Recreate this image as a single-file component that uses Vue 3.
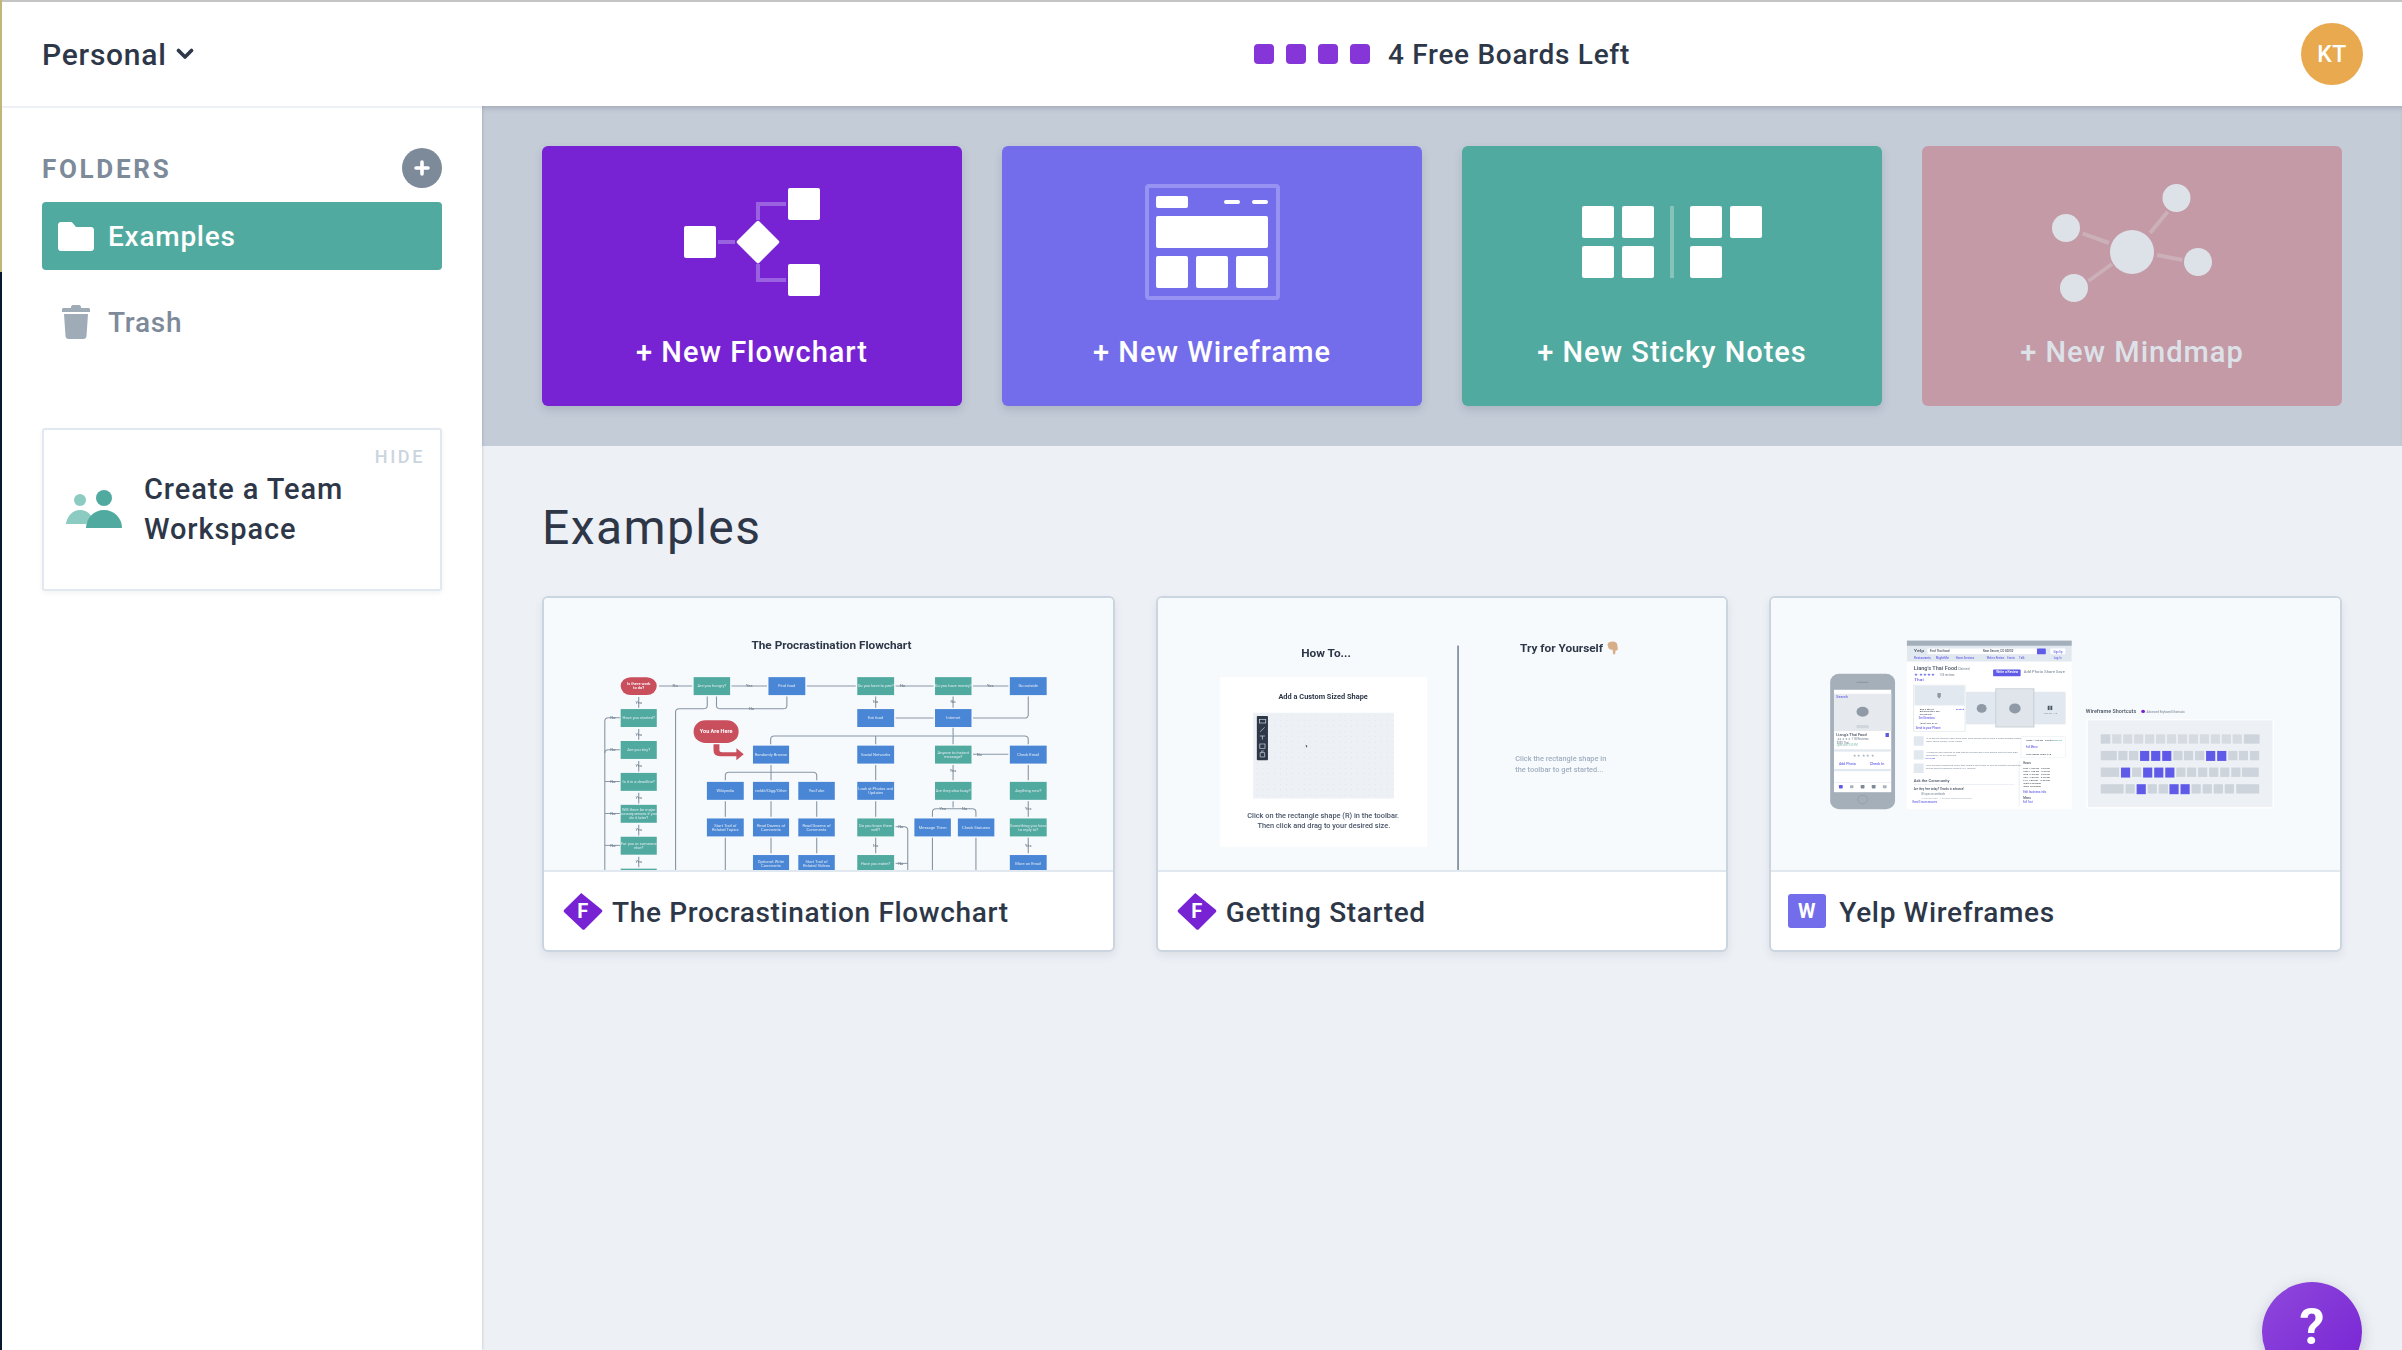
<script setup>
const B = '#4a86d6', G = '#51aa9f', R = '#c94f5d'
const flowNodes = [
  [416,260,515,314,G,'Are you hungry?'],[619,260,719,314,B,'Find food'],[860,260,960,314,G,'Do you have to pee?'],
  [1071,260,1170,314,G,'Do you have money?'],[1274,260,1374,314,B,'Go outside'],
  [218,356,316,410,G,'Have you started?'],[218,452,316,506,G,'Are you tiny?'],[218,548,316,602,G,'Is it in a deadline?'],
  [218,644,316,698,G,'Will there be major\nconsequences if you\ndo it later?'],[218,740,316,794,G,'For you or someone\nelse?'],[218,836,316,890,G,''],
  [860,356,960,410,B,'Eat food'],[1071,356,1170,410,B,'Internet'],
  [577,466,675,520,B,'Randomly Browse'],[860,466,960,520,B,'Social Networks'],[1071,466,1170,520,G,'Anyone to instant\nmessage?'],[1274,466,1374,520,B,'Check Email'],
  [452,575,552,629,B,'Wikipedia'],[577,575,675,629,B,'reddit/Digg/Other'],[700,575,799,629,B,'YouTube'],[860,575,960,629,B,'Look at Photos and\nUpdates'],
  [1071,575,1170,629,G,'Are they also busy?'],[1274,575,1374,629,G,'Anything new?'],
  [452,685,552,739,B,'Start Trail of\nRelated Topics'],[577,685,675,739,B,'Read Dozens of\nComments'],[700,685,799,739,B,'Read Dozens of\nComments'],
  [860,685,960,739,G,'Do you know them\nwell?'],[1015,685,1114,739,B,'Message Them'],[1133,685,1232,739,B,'Check Statuses'],[1274,685,1374,739,G,'Something you have\nto reply to?'],
  [577,795,675,849,B,'Optional: Write\nComments'],[700,795,799,849,B,'Start Trail of\nRelated Videos'],[860,795,960,849,G,'Have you eaten?'],[1274,795,1374,849,B,'More on Email']
].map(([x1,y1,x2,y2,fill,label]) => ({ x: x1, y: y1, w: x2-x1, h: y2-y1, fill, lines: label.split('\n') }))

const flowLines = [
  'M322 287H412','M519 287H615','M723 287H856','M964 287H1067','M1174 287H1270',
  'M267 320V352','M267 416V448','M267 512V544','M267 608V640','M267 704V736','M267 800V832',
  'M216 382H185Q175 382 175 392V840','M216 478H185Q175 478 175 488','M216 574H175','M216 670H175','M216 766H175',
  'M478 318V345Q478 355 488 355H660Q669 355 669 345V318','M453 318V345Q453 355 443 355H377Q367 355 367 365V840',
  'M910 318V352','M1120 318V352','M964 383H1067','M1324 318V372Q1324 383 1314 383H1174',
  'M1120 412V436','M625 462V447Q625 437 635 437H1314Q1324 437 1324 447V462','M910 437V462','M1120 437V462',
  'M1174 492H1270','M1120 524V570','M626 524V570','M502 570V556Q502 546 512 546H740Q750 546 750 556V570',
  'M910 524V570','M1324 524V570','M502 633V680','M626 633V680','M750 633V680','M910 633V680','M1324 633V680','M1120 633V652',
  'M1064 680V666Q1064 656 1074 656H1172Q1182 656 1182 666V680','M626 743V790','M750 743V790','M910 743V790','M1324 743V790',
  'M502 743V840','M1064 743V840','M1182 743V840','M964 710H987Q997 710 997 720V840','M964 820H997'
]
const flowTags = [
  [366,287,'No'],[567,287,'Yes'],[983,287,'No'],[1221,287,'Yes'],[267,336,'Yes'],[267,432,'Yes'],[267,526,'Yes'],[267,622,'Yes'],[267,718,'Yes'],[267,814,'Yes'],
  [197,382,'No'],[197,478,'No'],[197,574,'No'],[197,670,'No'],[197,766,'No'],[573,355,'No'],[910,335,'No'],[1120,335,'No'],[1191,492,'No'],[1120,540,'Yes'],
  [1092,656,'Yes'],[1151,656,'No'],[978,710,'No'],[910,767,'No'],[978,820,'No'],[1324,656,'Yes'],[1324,767,'Yes']
].map(([x,y,t]) => ({ x, y, t }))

const dots = []
for (let x = 288; x < 659; x += 16) for (let y = 374; y < 622; y += 16) dots.push({ x, y })

const KEY = '#cdd4db', PUR = '#5f5be8'
const keys = []
const addKey = (x, y, w, fill) => keys.push({ x, y, w, h: fill === PUR ? 30 : 28, fill })
;[[890,25],[1265,41]].forEach(([x,w]) => addKey(x,432,w,KEY))
for (let i = 0; i < 12; i++) addKey(920 + i*28.7,432,24,'#d5dbe1')
addKey(890,482,42,KEY)
;[[936,0],[964,0],[993,1],[1022,1],[1051,1],[1080,0],[1108,0],[1137,0],[1166,1],[1195,1],[1224,0],[1252,0],[1281,0]].forEach(([x,p]) => addKey(x,482,24,p?PUR:KEY))
addKey(890,532,48,KEY)
;[[943,1],[972,0],[1001,1],[1030,1],[1059,1],[1088,0],[1116,0],[1145,0],[1174,0],[1203,0],[1232,0]].forEach(([x,p]) => addKey(x,532,24,p?PUR:KEY))
addKey(1260,532,44,KEY)
addKey(890,582,60,KEY)
;[[955,0],[984,1],[1013,0],[1042,0],[1070,1],[1099,1],[1128,0],[1157,0],[1186,0],[1215,0]].forEach(([x,p]) => addKey(x,582,24,p?PUR:KEY))
addKey(1245,582,60,KEY)

const yelpRects = [
  [181,250,351,657,'#a5afba',24],[250,274,282,278,'#8f9aa6',2],[191,298,341,606,'#ffffff',0],[191,310,341,422,'#e6eaee',0],
  [250,404,282,414,'#cfd6dc',1],[326,428,335,440,PUR,0],[191,477,341,484,'#e2e8f0',0],[191,536,341,543,'#e2e8f0',0],[191,576,341,578,'#e2e8f0',0],
  [204,584,214,595,PUR,2],[233,585,242,594,'#a8b2bd',2],[261,584,271,595,'#7d8996',2],[290,584,300,595,'#7d8996',2],[319,585,329,594,'#a8b2bd',2],
  [382,150,814,657,'#ffffff',0],[382,150,814,166,'#a3afbb',0],[382,166,814,213,'#e2e8f0',0],[436,174,722,191,'#ffffff',0],[723,174,746,191,PUR,1],[758,174,797,191,'#ffffff',2],
  [608,237,680,257,PUR,2],[686,238,798,255,'#ffffff',2],
  [398,283,536,424,'#e8ecef',1],[401,286,533,422,'#ffffff',0],[402,286,533,345,'#e2e8f0',0],[537,304,614,402,'#e2e8f0',0],[716,304,798,402,'#e2e8f0',0],
  [614,294,716,411,'#b9c3cc',0],[616,296,714,409,'#dfe5ea',0],
  [400,438,426,466,'#e2e8f0',1],[400,480,426,508,'#e2e8f0',1],[400,520,426,548,'#e2e8f0',1],
  [680,438,798,502,'#edf0f3',1],[682,440,796,500,'#ffffff',0],[400,582,664,584,'#e2e8f0',0],[675,512,677,648,'#e2e8f0',0],
  [751,346,756,359,'#4d5966',0],[758,346,763,359,'#4d5966',0],
  [852,387,1344,655,'#ffffff',0],[856,390,1340,651,'#edf0f5',0]
].map(([x1,y1,x2,y2,fill,r]) => ({ x: x1, y: y1, w: x2-x1, h: y2-y1, fill, r }))

const DK = '#4a5563', MID = '#8b97a4', VIO = '#6a66ea'
const yelpTexts = [
  [197,438,13,DK,"Liang's Thai Food",80],[198,450,9,MID,'★★★★★ 118 Reviews',84],[198,460,9,MID,'$$$$ Thai',32],[198,468,8,'#9ac7bd','Open until 9:30 PM',55],
  [240,500,12,'#a7b1bc','★ ★ ★ ★ ★',56],[204,525,10,VIO,'Add Photo',44],[285,525,10,VIO,'Check In',38],[197,323,9,VIO,'Search',30],
  [400,185,12,DK,'Yelp',28],[442,185,9,DK,'Find  Thai food',52],[581,185,9,DK,'Near  Denver, CO 80202',80],[766,186,8,VIO,'Sign Up',24],
  [401,205,8,VIO,'Restaurants',44],[458,205,8,VIO,'Nightlife',34],[510,205,8,VIO,'Home Services',48],[591,205,8,VIO,'Write a Review',46],[645,205,8,VIO,'Events',20],[676,205,8,VIO,'Talk',14],[767,205,8,VIO,'Log In',20],
  [400,239,16,DK,"Liang's Thai Food",114],[516,239,9,MID,'Claimed',30],[402,257,12,'#6a66ea','★★★★★',54],[467,257,9,MID,'118 reviews',40],[401,272,9,VIO,'Thai',25],
  [616,249,8,'#ffffff','Write a Review',58],[688,249,8,MID,'Add Photo  Share  Save',108],
  [416,358,7,DK,'800 S 8th St',36],[416,366,7,DK,'Between 8th & Elm',52],[416,374,7,DK,'Old Denver',32],[510,358,7,VIO,'Edit',22],[413,387,8,VIO,'Get Directions',42],[416,402,7,DK,'(303) 555-0123',46],[405,415,8,VIO,'Send to your Phone',65],
  [741,371,7,MID,'See all 112',35],
  [432,447,7,MID,'"It is hard to believe such good Thai food comes out of such a small humble eatery',250],[432,456,7,MID,'from some locals, in 89 Views',95],
  [432,487,7,MID,'"I ordered one serving of pad thai to kill and got 3 full meals out of it and was',240],[432,496,7,MID,'delicious." in 97 reviews',80],[430,507,7,VIO,'Full Text',26],
  [432,527,7,MID,'"The noodles something fresh, they usually split a few of you so expertly big pad thai"',250],[432,536,7,MID,'but we tend to definitely order it" in 1 reviews',130],
  [400,575,11,DK,'Ask the Community',94],[400,600,8,DK,'Are they free today? Thanks in advance!',132],[420,615,8,MID,'We open on weekends',62],[420,626,7,'#b0bac4','3 months ago - 1 person found this helpful',132],[397,640,8,VIO,'Read 3 more answers',64],
  [694,453,7,DK,'Today: 11:00 am - 9:30 pm',72],[768,453,7,'#51aa9f','open now',20],[694,472,8,VIO,'Full Menu',30],[694,493,7,DK,'Price Range Under $10',66],
  [687,520,8,DK,'Hours',20],[687,537,7,DK,'Mon   11:00 am - 9:30 pm',70],[687,546,7,DK,'Tues   11:00 am - 9:30 pm',70],[687,555,7,DK,'Wed   11:00 am - 9:30 pm',70],[687,564,7,DK,'Thu   11:00 am - 9:30 pm',70],[687,573,7,DK,'Fri    11:00 am - 9:30 pm',70],[687,582,7,DK,'Sat    Closed',46],[687,591,7,DK,'Sun    Closed',46],
  [687,607,8,VIO,'Edit business info',60],[687,627,8,DK,'Menu',20],[686,640,8,VIO,'Full Text',26],
  [851,367,15,DK,'Wireframe Shortcuts',132],[1010,367,8,MID,'Advanced Keyboard Shortcuts',100]
].map(([x,y,size,fill,t,len]) => ({ x, y, size, fill, t, len }))

const actions = [
  { label: '+ New Flowchart', cls: 'purple', kind: 'flow' },
  { label: '+ New Wireframe', cls: 'violet', kind: 'wire' },
  { label: '+ New Sticky Notes', cls: 'teal', kind: 'sticky' },
  { label: '+ New Mindmap', cls: 'rose', kind: 'mind' }
]
</script>

<template>
  <div class="page">
    <div class="edge"></div>
    <div class="app">
      <header class="topbar">
        <div class="account">
          <span>Personal</span>
          <svg width="18" height="12" viewBox="0 0 18 12"><path d="M2.5 2.5 9 9l6.5-6.5" fill="none" stroke="#2d3748" stroke-width="3.6" stroke-linecap="round" stroke-linejoin="round"/></svg>
        </div>
        <div class="top-main">
          <div class="boards">
            <i v-for="n in 4" :key="n" class="dot"></i>
            <span class="boards-text">4 Free Boards Left</span>
          </div>
          <div class="avatar">KT</div>
        </div>
      </header>

      <div class="body">
        <aside class="sidebar">
          <div class="folders-head">
            <span class="folders-title">FOLDERS</span>
            <button class="plus">
              <svg width="16" height="16" viewBox="0 0 16 16"><path d="M8 2v12M2 8h12" stroke="#fff" stroke-width="3.6" stroke-linecap="round"/></svg>
            </button>
          </div>
          <div class="folder active">
            <svg class="folder-icon" width="36" height="29" viewBox="0 0 36 29"><path d="M3 0h9.5c1 0 1.8.4 2.4 1.2L18 5h15c1.7 0 3 1.3 3 3v18c0 1.7-1.3 3-3 3H3c-1.700 0-3-1.300-3-3V3c0-1.700 1.300-3 3-3z" fill="#fff"/></svg>
            <span>Examples</span>
          </div>
          <div class="folder trash">
            <svg class="folder-icon" width="28" height="34" viewBox="0 0 28 34"><path d="M9 2c0-1 .8-2 2-2h6c1.200 0 2 1 2 2v1h7.500c.8 0 1.500.7 1.500 1.500V7H0V4.500C0 3.700.7 3 1.500 3H9zM2 9h24l-1.500 22c-.1 1.700-1.400 3-3 3H6.500c-1.600 0-2.900-1.300-3-3z" fill="#a0abb8"/></svg>
            <span>Trash</span>
          </div>
          <div class="team">
            <div class="hide">HIDE</div>
            <div class="team-body">
              <svg width="56" height="38" viewBox="0 0 56 38">
                <circle cx="14" cy="10" r="6" fill="#8ccbc1"/>
                <path d="M0 34c1-8 7-14 14-14 5 0 9 2.500 12 7-3 2-5 4.500-6 7z" fill="#8ccbc1"/>
                <circle cx="38" cy="8" r="8" fill="#51aa9f"/>
                <path d="M20 38c0-10 8-18 18-18s18 8 18 18z" fill="#51aa9f"/>
              </svg>
              <div class="team-text">Create a Team<br>Workspace</div>
            </div>
          </div>
        </aside>

        <main class="main">
          <section class="hero">
            <div v-for="a in actions" :key="a.kind" class="action" :class="a.cls">
              <svg class="action-icon" width="420" height="170" viewBox="0 0 420 170">
                <g v-if="a.kind === 'flow'">
                  <path d="M176 96h17M216 74V58h28M216 118v16h28" fill="none" stroke="#9a62e0" stroke-width="4"/>
                  <rect x="142" y="80" width="32" height="32" rx="2" fill="#fff"/>
                  <rect x="246" y="42" width="32" height="32" rx="2" fill="#fff"/>
                  <rect x="246" y="118" width="32" height="32" rx="2" fill="#fff"/>
                  <path d="M214.500 75.500a2 2 0 0 1 3 0l19 19a2 2 0 0 1 0 3l-19 19a2 2 0 0 1-3 0l-19-19a2 2 0 0 1 0-3z" fill="#fff"/>
                </g>
                <g v-else-if="a.kind === 'wire'" fill="#fff">
                  <rect x="145" y="40" width="131" height="112" rx="2" fill="none" stroke="#9793f2" stroke-width="4"/>
                  <rect x="154" y="50" width="32" height="12" rx="2"/>
                  <rect x="222" y="54" width="16" height="4" rx="2"/>
                  <rect x="250" y="54" width="16" height="4" rx="2"/>
                  <rect x="154" y="70" width="112" height="32" rx="2"/>
                  <rect x="154" y="110" width="32" height="32" rx="2"/>
                  <rect x="194" y="110" width="32" height="32" rx="2"/>
                  <rect x="234" y="110" width="32" height="32" rx="2"/>
                </g>
                <g v-else-if="a.kind === 'sticky'" fill="#fff">
                  <rect x="120" y="60" width="32" height="32" rx="2"/>
                  <rect x="160" y="60" width="32" height="32" rx="2"/>
                  <rect x="120" y="100" width="32" height="32" rx="2"/>
                  <rect x="160" y="100" width="32" height="32" rx="2"/>
                  <rect x="208" y="60" width="4" height="72" fill="#86c4bb"/>
                  <rect x="228" y="60" width="32" height="32" rx="2"/>
                  <rect x="268" y="60" width="32" height="32" rx="2"/>
                  <rect x="228" y="100" width="32" height="32" rx="2"/>
                </g>
                <g v-else>
                  <path d="M160.600 87.300 187 97M235 109l25.400 5M228 87l17.700-21.300M166.500 135 190 118" fill="none" stroke="#cbafb9" stroke-width="4"/>
                  <g fill="#dde2e8">
                    <circle cx="210" cy="106" r="22"/>
                    <circle cx="254.500" cy="52" r="14"/>
                    <circle cx="144" cy="82" r="14"/>
                    <circle cx="276" cy="116" r="14"/>
                    <circle cx="152" cy="142" r="14"/>
                  </g>
                </g>
              </svg>
              <div class="action-label">{{ a.label }}</div>
            </div>
          </section>

          <section class="examples">
            <h1>Examples</h1>
            <div class="docs">
              <article class="doc">
                <div class="preview">
                  <svg class="thumb" viewBox="10 22 1543 818" preserveAspectRatio="none">
                    <text x="790" y="176" text-anchor="middle" class="t-title">The Procrastination Flowchart</text>
                    <path v-for="(d, i) in flowLines" :key="i" :d="d" fill="none" stroke="#8796a5" stroke-width="3"/>
                    <text v-for="(t, i) in flowTags" :key="'t' + i" :x="t.x" :y="t.y + 4" text-anchor="middle" font-size="11" fill="#71808f">{{ t.t }}</text>
                    <rect x="218" y="260" width="98" height="54" rx="27" :fill="R"/>
                    <text x="267" y="283" text-anchor="middle" font-size="11" fill="#fff">Is there work</text>
                    <text x="267" y="297" text-anchor="middle" font-size="11" fill="#fff">to do?</text>
                    <g v-for="(n, i) in flowNodes" :key="'n' + i">
                      <rect :x="n.x" :y="n.y" :width="n.w" :height="n.h" :fill="n.fill"/>
                      <text v-for="(l, j) in n.lines" :key="j" :x="n.x + n.w / 2" :y="n.y + n.h / 2 + 4 + (j - (n.lines.length - 1) / 2) * 13" text-anchor="middle" font-size="11" font-weight="400" fill="#dfeaf2">{{ l }}</text>
                    </g>
                    <rect x="416" y="390" width="122" height="68" rx="32" :fill="R"/>
                    <text x="477" y="429" text-anchor="middle" font-size="15" font-weight="700" fill="#fff">You Are Here</text>
                    <path d="M470 462h16v18q0 6 8 6h38v-12l20 18-20 18v-12h-44q-18 0-18-18z" :fill="R"/>
                  </svg>
                </div>
                <div class="doc-foot">
                  <svg class="doc-icon" width="44" height="38" viewBox="0 0 44 38">
                    <path d="M20.200 1 40.500 17.500a2 2 0 0 1 0 3L24 37a2 2 0 0 1-3 0L3.500 20.500a2 2 0 0 1 0-3L20 1.200a2 2 0 0 1 .2-.2z" fill="#7723d3"/>
                    <text x="22" y="26" text-anchor="middle" class="t-badge">F</text>
                  </svg>
                  <span>The Procrastination Flowchart</span>
                </div>
              </article>

              <article class="doc">
                <div class="preview">
                  <svg class="thumb" viewBox="22 22 1536 818" preserveAspectRatio="none">
                    <text x="476" y="200" text-anchor="middle" class="t-title">How To...</text>
                    <rect x="190" y="260" width="559" height="510" fill="#fff"/>
                    <text x="468" y="327" text-anchor="middle" font-size="20" font-weight="700" fill="#2d3748">Add a Custom Sized Shape</text>
                    <rect x="279" y="367" width="380" height="258" fill="#edf0f5"/>
                    <rect v-for="(d, i) in dots" :key="i" :x="d.x" :y="d.y" width="2" height="2" fill="#d6dce3"/>
                    <rect x="289" y="377" width="30" height="133" rx="2" fill="#2d3748"/>
                    <g fill="none" stroke="#cbd5e0" stroke-width="2">
                      <rect x="296" y="387" width="17" height="11"/>
                      <path d="M298 424l12-13"/>
                      <path d="M297 437h14M304 437v11"/>
                      <rect x="297" y="461" width="14" height="13"/>
                      <path d="M298 487h12v13h-12zM302 487v-5h6"/>
                    </g>
                    <path d="M421 463l5 5-3 1-1 4z" fill="#2d3748"/>
                    <text x="468" y="685" text-anchor="middle" font-size="20" fill="#4a5568">Click on the rectangle shape (R) in the toolbar.</text>
                    <text x="470" y="714" text-anchor="middle" font-size="20" fill="#4a5568">Then click and drag to your desired size.</text>
                    <rect x="830" y="165" width="5" height="675" fill="#8796a5"/>
                    <text x="1000" y="184" class="t-title">Try for Yourself</text>
                    <path d="M1236 162q2-9 14-9 12 0 13 12l1 12q0 3-4 3l-2 0-1 9q-1 3-3 3t-3-3l-1-11q-8 0-11-5z" fill="#d8ae8a"/>
                    <text x="987" y="513" font-size="20" fill="#a0aec0">Click the rectangle shape in</text>
                    <text x="987" y="545" font-size="20" fill="#a0aec0">the toolbar to get started...</text>
                  </svg>
                </div>
                <div class="doc-foot">
                  <svg class="doc-icon" width="44" height="38" viewBox="0 0 44 38">
                    <path d="M20.200 1 40.500 17.500a2 2 0 0 1 0 3L24 37a2 2 0 0 1-3 0L3.500 20.500a2 2 0 0 1 0-3L20 1.200a2 2 0 0 1 .2-.2z" fill="#7723d3"/>
                    <text x="22" y="26" text-anchor="middle" class="t-badge">F</text>
                  </svg>
                  <span>Getting Started</span>
                </div>
              </article>

              <article class="doc">
                <div class="preview">
                  <svg class="thumb" viewBox="26 22 1490 818" preserveAspectRatio="none">
                    <rect v-for="(r, i) in yelpRects" :key="i" :x="r.x" :y="r.y" :width="r.w" :height="r.h" :rx="r.r" :fill="r.fill"/>
                    <g fill="#8f9aa6">
                      <ellipse cx="266" cy="364" rx="16" ry="15"/>
                      <ellipse cx="578" cy="354" rx="13" ry="13"/>
                      <ellipse cx="665" cy="354" rx="15" ry="15"/>
                      <path d="M462 308h9v10l-4.500 7-4.500-7z"/>
                    </g>
                    <circle cx="266" cy="628" r="13" fill="none" stroke="#8f9aa6" stroke-width="2"/>
                    <circle cx="1001" cy="363" r="5" fill="#7723d3"/>
                    <text v-for="(t, i) in yelpTexts" :key="'y' + i" :x="t.x" :y="t.y" :font-size="t.size" :fill="t.fill" :textLength="t.len" lengthAdjust="spacingAndGlyphs">{{ t.t }}</text>
                    <rect v-for="(k, i) in keys" :key="'k' + i" :x="k.x" :y="k.y" :width="k.w" :height="k.h" :fill="k.fill"/>
                  </svg>
                </div>
                <div class="doc-foot">
                  <svg class="doc-icon" width="44" height="38" viewBox="0 0 44 38">
                    <rect x="0" y="2" width="38" height="34" rx="3" fill="#736deb"/>
                    <text x="19" y="26" text-anchor="middle" class="t-badge">W</text>
                  </svg>
                  <span>Yelp Wireframes</span>
                </div>
              </article>
            </div>
          </section>
        </main>
      </div>
    </div>
    <button class="help">?</button>
  </div>
</template>

<style>
html, body { margin: 0; padding: 0; background: #fff; overflow: hidden; }
</style>

<style scoped>
.page {
  position: relative;
  display: flex;
  width: 2402px;
  height: 1350px;
  overflow: hidden;
  font-family: Roboto, "Noto Sans", sans-serif;
  font-weight: 500;
  color: #2d3748;
  background: #fff;
}
.edge {
  flex: none;
  width: 2px;
  background: linear-gradient(#c3b676 0 272px, #0b1730 272px);
}
.app {
  flex: 1;
  min-width: 0;
  display: flex;
  flex-direction: column;
}
.topbar {
  flex: none;
  display: flex;
  height: 104px;
  border-top: 2px solid #c4c4c4;
  background: #fff;
  position: relative;
  z-index: 2;
}
.account {
  flex: none;
  width: 480px;
  box-sizing: border-box;
  padding-left: 40px;
  display: flex;
  align-items: center;
  gap: 9px;
  font-size: 30px;
  letter-spacing: 0.75px;
}
.top-main {
  flex: 1;
  display: flex;
  align-items: center;
  padding-left: 101px;
  padding-right: 39px;
}
.boards {
  flex: 1;
  display: flex;
  align-items: center;
  justify-content: center;
  gap: 12px;
}
.dot {
  width: 20px;
  height: 20px;
  border-radius: 4px;
  background: #8636d8;
}
.boards-text {
  margin-left: 6px;
  font-size: 28px;
  letter-spacing: 0.7px;
}
.avatar {
  flex: none;
  width: 62px;
  height: 62px;
  border-radius: 50%;
  background: #e8a94f;
  color: #fff;
  display: flex;
  align-items: center;
  justify-content: center;
  font-size: 23px;
  font-weight: 500;
  letter-spacing: 0.5px;
}
.body {
  flex: 1;
  min-height: 0;
  display: flex;
}
.sidebar {
  flex: none;
  width: 480px;
  box-sizing: border-box;
  padding: 40px 40px 0;
  border-top: 2px solid #edf0f5;
  background: #fff;
  box-shadow: 1px 0 2px rgba(74, 85, 104, 0.16);
  position: relative;
  z-index: 1;
}
.folders-head {
  display: flex;
  align-items: center;
  justify-content: space-between;
  height: 40px;
  margin-bottom: 14px;
}
.folders-title {
  padding-top: 2px;
  font-size: 26px;
  font-weight: 700;
  letter-spacing: 2.7px;
  color: #7c8a99;
}
.plus {
  width: 40px;
  height: 40px;
  padding: 0;
  border: 0;
  border-radius: 50%;
  background: #7c8a99;
  display: flex;
  align-items: center;
  justify-content: center;
}
.folder {
  height: 68px;
  border-radius: 4px;
  display: flex;
  align-items: center;
  font-size: 28px;
  letter-spacing: 0.75px;
}
.folder-icon { flex: none; }
.folder.active {
  background: #51aa9f;
  color: #fff;
  padding-left: 16px;
  gap: 14px;
}
.folder.trash {
  margin-top: 18px;
  padding-left: 20px;
  gap: 18px;
  color: #7c8a99;
}
.team {
  box-sizing: border-box;
  width: 400px;
  height: 163px;
  margin-top: 72px;
  padding-top: 15px;
  border: 2px solid #e2e8f0;
  border-radius: 3px;
  box-shadow: 0 2px 4px rgba(74, 85, 104, 0.08);
}
.hide {
  height: 24px;
  line-height: 24px;
  padding-right: 15px;
  text-align: right;
  font-size: 18px;
  letter-spacing: 2.6px;
  color: #cbd5e0;
}
.team-body {
  display: flex;
  align-items: center;
  gap: 22px;
  padding-left: 22px;
}
.team-text {
  font-size: 29px;
  line-height: 40px;
  letter-spacing: 0.9px;
}
.main {
  flex: 1;
  min-width: 0;
  background: #edf0f5;
}
.hero {
  box-sizing: border-box;
  height: 340px;
  padding: 40px 60px;
  display: grid;
  grid-template-columns: repeat(4, 1fr);
  gap: 40px;
  background: #c4ccd8;
  box-shadow: inset 0 5px 5px -3px rgba(74, 85, 104, 0.28);
}
.action {
  height: 260px;
  border-radius: 6px;
  color: #fff;
  box-shadow: 0 4px 8px rgba(74, 85, 104, 0.2);
  overflow: hidden;
}
.action-icon { display: block; }
.action-label {
  margin-top: 16px;
  line-height: 40px;
  text-align: center;
  font-size: 29px;
  letter-spacing: 1px;
}
.purple { background: #7723d3; }
.violet { background: #736deb; }
.teal { background: #51aa9f; }
.rose { background: #c39aa6; color: #dde2e8; box-shadow: none; }
.examples { padding: 55px 60px 0; }
h1 {
  margin: 0 0 43px;
  font-size: 48px;
  line-height: 52px;
  font-weight: 400;
  letter-spacing: 1.4px;
  position: relative;
  top: 1px;
}
.docs {
  display: grid;
  grid-template-columns: repeat(3, 1fr);
  gap: 41px;
}
.doc {
  box-sizing: border-box;
  height: 356px;
  border: 2px solid #cbd5e0;
  border-radius: 6px;
  background: #fff;
  overflow: hidden;
  box-shadow: 0 4px 8px rgba(74, 85, 104, 0.1);
}
.preview {
  height: 272px;
  background: #f7fafc;
  border-bottom: 2px solid #e2e8f0;
}
.thumb {
  display: block;
  width: 100%;
  height: 100%;
  filter: blur(0.6px);
}
.t-title {
  font-size: 32px;
  font-weight: 700;
  fill: #2d3748;
}
.doc-foot {
  height: 78px;
  padding-left: 17px;
  display: flex;
  align-items: center;
  gap: 7px;
  font-size: 28px;
  letter-spacing: 0.65px;
}
.doc-foot span { padding-top: 2px; }
.doc-icon { flex: none; }
.t-badge {
  font-size: 20px;
  font-weight: 700;
  fill: #fff;
}
.help {
  position: absolute;
  top: 1282px;
  right: 40px;
  width: 100px;
  height: 100px;
  padding: 0 0 10px;
  border: 0;
  border-radius: 50%;
  background: linear-gradient(135deg, #8f48dc, #7723d3);
  box-shadow: 0 4px 14px rgba(74, 85, 104, 0.25);
  color: #fff;
  font-family: Roboto, sans-serif;
  font-size: 50px;
  font-weight: 700;
  line-height: 1;
}
</style>
